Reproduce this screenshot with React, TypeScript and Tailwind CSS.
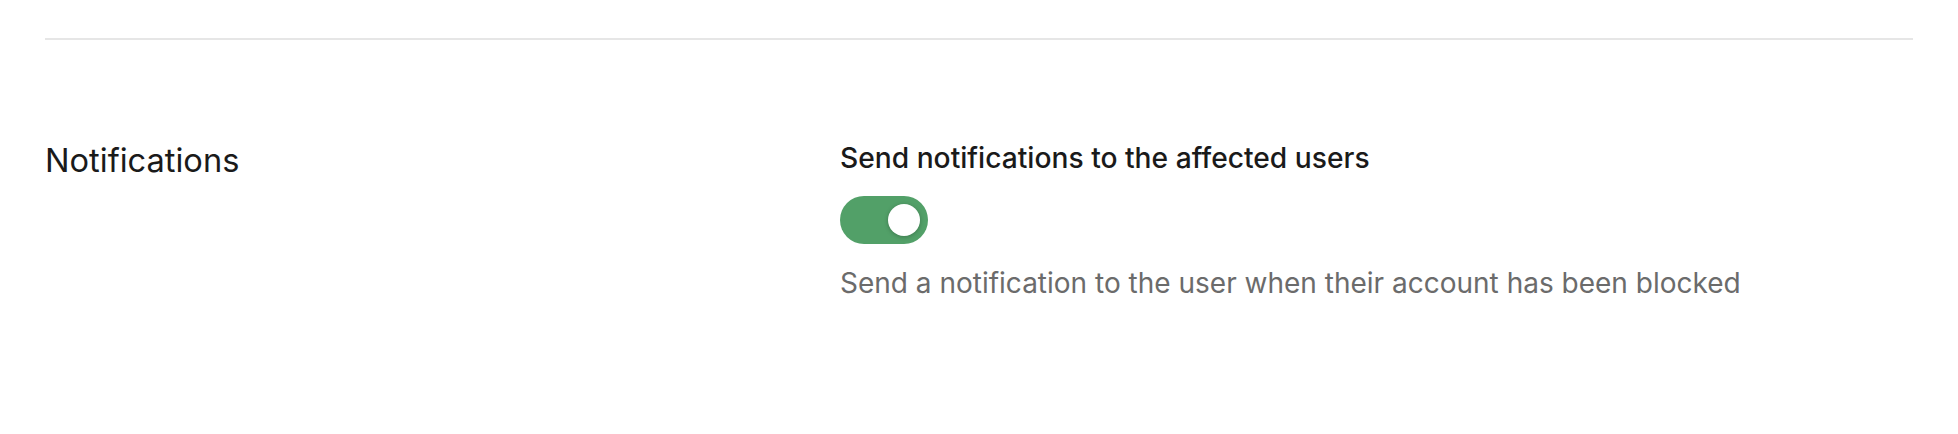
import React, { useState } from 'react';

const Toggle: React.FC<{ checked: boolean; onChange: (v: boolean) => void }> = ({ checked, onChange }) => {
    return (
        <button
            type="button"
            role="switch"
            aria-checked={checked}
            onClick={() => onChange(!checked)}
            className={`relative w-[88px] h-[48px] rounded-full transition-colors ${checked ? 'bg-[#52a068]' : 'bg-[#d4d4d4]'}`}
        >
            <span
                className={`absolute top-[8px] w-[32px] h-[32px] rounded-full bg-white shadow-[0_1px_4px_rgba(0,0,0,0.25)] transition-all ${checked ? 'left-[48px]' : 'left-[8px]'}`}
            />
        </button>
    );
};

export default function App() {
    const [notify, setNotify] = useState(true);

    return (
        <div className="w-full h-[434px] bg-white px-[45px] pt-[38px] font-['Inter','Noto_Sans',sans-serif]">
            <div className="h-[2px] bg-[#e6e6e6]" />

            <div className="flex mt-[100px]">
                <div className="w-[795px] shrink-0">
                    <h2 className="text-[32.6px] leading-[40px] font-normal text-[#1a1a1a]">Notifications</h2>
                </div>

                <div className="flex flex-col items-start">
                    <label className="text-[28.2px] leading-[36px] font-medium text-[#1a1a1a]">
                        Send notifications to the affected users
                    </label>
                    <div className="mt-[20px]">
                        <Toggle checked={notify} onChange={setNotify} />
                    </div>
                    <p className="mt-[15px] text-[28px] leading-[36px] text-[#6b6b6b]">
                        Send a notification to the user when their account has been blocked
                    </p>
                </div>
            </div>
        </div>
    );
}
